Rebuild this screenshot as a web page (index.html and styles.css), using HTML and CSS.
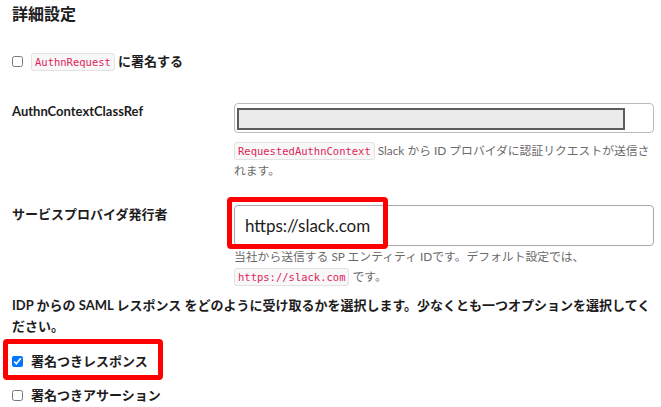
FILE: index.html
```html
<!DOCTYPE html>
<html lang="ja">
<head>
    <meta charset="UTF-8">
    <meta name="viewport" content="width=device-width, initial-scale=1.0">
    <title>詳細設定</title>
    <link rel="stylesheet" href="styles.css">
</head>
<body>

<h2 class="section-title">詳細設定</h2>

<label class="check-row sign-request">
    <input type="checkbox">
    <span><code>AuthnRequest</code> に署名する</span>
</label>

<div class="field-row context-row">
    <div class="field-label">AuthnContextClassRef</div>
    <div class="field-body">
        <div class="select-box">
            <div class="select-inner"></div>
        </div>
        <p class="help"><code>RequestedAuthnContext</code> Slack から ID プロバイダに認証リクエストが送信されます。</p>
    </div>
</div>

<div class="field-row issuer-row">
    <div class="field-label">サービスプロバイダ発行者</div>
    <div class="field-body">
        <div class="text-input">
            https://slack.com
            <span class="highlight issuer-highlight"></span>
        </div>
        <p class="help">当社から送信する SP エンティティ IDです。デフォルト設定では、<br><code>https://slack.com</code> です。</p>
    </div>
</div>

<p class="intro">IDP からの SAML レスポンス をどのように受け取るかを選択します。少なくとも一つオプションを選択してください。</p>

<label class="check-row response-row">
    <input type="checkbox" checked>
    <span>署名つきレスポンス</span>
    <span class="highlight response-highlight"></span>
</label>

<label class="check-row assertion-row">
    <input type="checkbox">
    <span>署名つきアサーション</span>
</label>

</body>
</html>
```

FILE: styles.css
```css
body {
    margin: 0;
    padding: 2px 6px 0 12px;
    background-color: #ffffff;
    color: #1d1c1d;
    font-family: Lato, "Noto Sans CJK JP", sans-serif;
    font-size: 13px;
}
.section-title {
    margin: 0;
    font-size: 16px;
    line-height: 24px;
    font-weight: 700;
}
.check-row {
    position: relative;
    display: flex;
    align-items: center;
    gap: 8px;
    line-height: 20px;
    font-weight: 700;
}
.check-row input[type="checkbox"] {
    width: 11px;
    height: 11px;
    margin: 0;
}
.sign-request {
    margin-top: 25px;
}
code {
    font-family: "DejaVu Sans Mono", monospace;
    font-size: 10.5px;
    font-weight: 400;
    color: #e01e5a;
    background-color: #f8f8f8;
    border: 1px solid #e2e2e2;
    border-radius: 3px;
    padding: 2px 3px;
}
.field-row {
    display: grid;
    grid-template-columns: 222px 420px;
}
.field-label {
    font-weight: 700;
}
.context-row {
    margin-top: 31px;
}
.context-row .field-label {
    line-height: 16px;
}
.issuer-row {
    margin-top: 24px;
}
.issuer-row .field-label {
    line-height: 18px;
}
.select-box {
    height: 30px;
    box-sizing: border-box;
    border: 1px solid #bbbbbb;
    border-radius: 4px;
    padding: 4px 28px 2px 2px;
}
.select-inner {
    height: 22px;
    box-sizing: border-box;
    background-color: #ebebeb;
    border: 2px solid #5c5c5c;
}
.text-input {
    position: relative;
    height: 41px;
    box-sizing: border-box;
    border: 1px solid #a9a9a9;
    border-radius: 4px;
    padding: 0 10px;
    display: flex;
    align-items: center;
    font-size: 17px;
}
.help {
    margin: 8px -6px 0 0;
    color: #6b6a6b;
    font-size: 11.8px;
    line-height: 20px;
}
.issuer-row .help {
    margin-top: 1px;
}
.intro {
    margin: 8px 0 0;
    font-weight: 700;
    line-height: 21px;
}
.response-row {
    margin-top: 14px;
}
.assertion-row {
    margin-top: 14px;
}
.highlight {
    position: absolute;
    box-sizing: border-box;
    border: 5px solid #ff0000;
    border-radius: 4px;
}
.issuer-highlight {
    left: -8px;
    top: -9px;
    width: 161px;
    height: 52px;
}
.response-highlight {
    left: -9px;
    top: -12px;
    width: 160px;
    height: 41px;
}
```
